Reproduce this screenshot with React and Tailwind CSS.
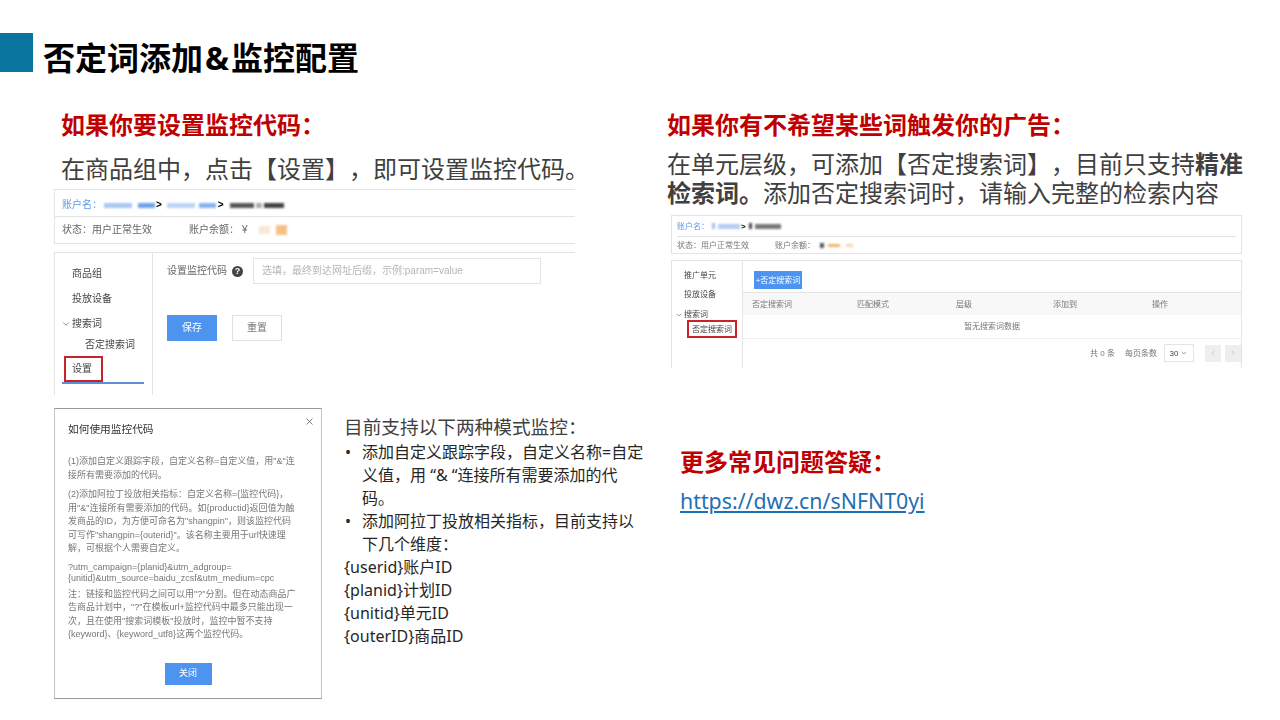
import React from 'react';
import { ChevronDown, ChevronLeft, ChevronRight, X } from 'lucide-react';

const slideFont = "font-['Noto_Sans','Noto_Sans_CJK_SC',sans-serif]";
const shotFont = "font-['Liberation_Sans','Noto_Sans_CJK_SC',sans-serif]";

// blurred-out account values in the screenshots
function Smudge({ className }) {
  return <span className={`inline-block blur-[1px] ${className}`}></span>;
}

function MonitorPanel() {
  return (
    <div className={`${shotFont} w-[521px] h-[206px] flex flex-col text-[10px] leading-[14px] text-[#666666] blur-[0.3px]`}>
      <div className="h-[55px] border-y border-[#e4e4e4] border-l flex flex-col">
        <div className="h-[27px] border-b border-[#e4e4e4] pl-[7px] pt-[4px] flex items-center text-[#5b9be8]">
          <span>账户名：</span>
          <Smudge className="ml-[2px] w-[28px] h-[5px] bg-[#a9c8f3]" />
          <Smudge className="ml-[6px] w-[17px] h-[5px] bg-[#6ea2ea]" />
          <span className="ml-[1px] font-bold text-black">&gt;</span>
          <Smudge className="ml-[5px] w-[28px] h-[5px] bg-[#bcd5f5]" />
          <Smudge className="ml-[4px] w-[17px] h-[5px] bg-[#86b3ee]" />
          <span className="ml-[2px] font-bold text-black">&gt;</span>
          <Smudge className="ml-[6px] w-[24px] h-[5px] bg-[#555555]" />
          <Smudge className="ml-[2px] w-[6px] h-[5px] bg-[#aaaaaa]" />
          <Smudge className="ml-[2px] w-[20px] h-[5px] bg-[#444444]" />
        </div>
        <div className="flex-1 pl-[7px] flex items-center">
          <span>状态：用户正常生效</span>
          <span className="ml-[37px]">账户余额：</span>
          <span className="ml-[3px]">¥</span>
          <Smudge className="ml-[11px] w-[11px] h-[8px] bg-[#fae8d4]" />
          <Smudge className="ml-[6px] w-[11px] h-[10px] bg-[#f7c186]" />
        </div>
      </div>
      <div className="mt-[8px] flex-1 border-t border-[#e4e4e4] border-l flex">
        <div className="w-[98px] border-r border-[#e4e4e4] flex flex-col text-[#444444]">
          <span className="mt-[14px] ml-[17px]">商品组</span>
          <span className="mt-[11px] ml-[17px]">投放设备</span>
          <div className="mt-[11px] ml-[6px] flex items-center gap-[1px]">
            <ChevronDown className="w-[10px] h-[10px]" strokeWidth={1.5} />
            <span>搜索词</span>
          </div>
          <span className="mt-[7px] ml-[30px]">否定搜索词</span>
          <div className="ml-[9px] mt-[4px] w-[39px] h-[26px] border-[2px] border-[#c8222a] pl-[6px] flex items-center">设置</div>
          <div className="ml-[7px] w-[82px] h-[2px] bg-[#5b8fd6]"></div>
        </div>
        <div className="flex-1 pl-[14px] pt-[5px]">
          <div className="flex items-center">
            <span>设置监控代码</span>
            <span className="ml-[5px] w-[11px] h-[11px] rounded-full bg-[#444444] text-white text-[9px] font-bold leading-[11px] text-center">?</span>
            <div className="ml-[10px] w-[288px] h-[26px] border border-[#e4e4e4] pl-[8px] flex items-center text-[#b5b5b5]">选填，最终到达网址后缀，示例:param=value</div>
          </div>
          <div className="mt-[31px] flex gap-[15px]">
            <button className="w-[50px] h-[26px] bg-[#4c94f0] text-white">保存</button>
            <button className="w-[50px] h-[26px] border border-[#e0e0e0] text-[#777777]">重置</button>
          </div>
        </div>
      </div>
    </div>
  );
}

function NegativePanel() {
  return (
    <div className={`${shotFont} w-[571px] h-[153px] flex flex-col text-[8px] leading-[11px] text-[#777777] blur-[0.3px]`}>
      <div className="h-[39px] border border-[#e4e4e4] flex flex-col">
        <div className="h-[21px] mx-[5px] border-b border-[#e4e4e4] flex items-center text-[#5b9be8]">
          <span>账户名：</span>
          <Smudge className="ml-[3px] w-[3px] h-[6px] bg-[#9cc2f2]" />
          <Smudge className="ml-[3px] w-[22px] h-[5px] bg-[#b3cef2]" />
          <span className="ml-[1px] font-bold text-black">&gt;</span>
          <Smudge className="ml-[3px] w-[3px] h-[6px] bg-[#444444]" />
          <Smudge className="ml-[3px] w-[26px] h-[5px] bg-[#777777]" />
        </div>
        <div className="flex-1 pl-[5px] flex items-center">
          <span>状态：用户正常生效</span>
          <span className="ml-[26px]">账户余额：</span>
          <Smudge className="ml-[5px] w-[4px] h-[5px] bg-[#555555]" />
          <Smudge className="ml-[4px] w-[12px] h-[3px] bg-[#eeb565]" />
          <Smudge className="ml-[6px] w-[7px] h-[3px] bg-[#f6d8a8]" />
        </div>
      </div>
      <div className="mt-[6px] flex-1 border-t border-x border-[#e4e4e4] flex">
        <div className="w-[71px] border-r border-[#e4e4e4] flex flex-col text-[#444444]">
          <span className="mt-[9px] ml-[12px]">推广单元</span>
          <span className="mt-[8px] ml-[12px]">投放设备</span>
          <div className="mt-[9px] ml-[3px] flex items-center gap-[1px]">
            <ChevronDown className="w-[8px] h-[8px]" strokeWidth={1.5} />
            <span>搜索词</span>
          </div>
          <div className="ml-[15px] w-[50px] h-[18px] border-[2px] border-[#c8222a] flex items-center justify-center">否定搜索词</div>
        </div>
        <div className="flex-1 flex flex-col">
          <button className="ml-[11px] mt-[10px] w-[48px] h-[18px] bg-[#4c94f0] text-white">+否定搜索词</button>
          <div className="mt-[3px] h-[23px] border-t border-[#e4e4e4] bg-[#f8f8f8] pl-[9px] flex items-center">
            <span className="w-[105px]">否定搜索词</span>
            <span className="w-[99px]">匹配模式</span>
            <span className="w-[97px]">层级</span>
            <span className="w-[99px]">添加到</span>
            <span>操作</span>
          </div>
          <div className="h-[24px] border-b border-[#eeeeee] flex items-center justify-center">暂无搜索词数据</div>
          <div className="mt-[5px] flex items-center justify-end">
            <span>共 0 条</span>
            <span className="ml-[10px]">每页条数</span>
            <div className="ml-[7px] w-[30px] h-[18px] border border-[#e4e4e4] flex items-center justify-center gap-[2px] text-[#444444]">
              30
              <ChevronDown className="w-[8px] h-[8px]" strokeWidth={1.5} />
            </div>
            <div className="ml-[11px] w-[16px] h-[17px] bg-[#eeeeee] flex items-center justify-center">
              <ChevronLeft className="w-[8px] h-[8px] text-[#bbbbbb]" />
            </div>
            <div className="ml-[4px] w-[16px] h-[17px] bg-[#eeeeee] flex items-center justify-center">
              <ChevronRight className="w-[8px] h-[8px] text-[#bbbbbb]" />
            </div>
          </div>
        </div>
      </div>
    </div>
  );
}

function HelpDialog() {
  return (
    <div className={`${shotFont} w-[268px] h-[291px] border border-[#c4c4c4] border-y-[#999999] px-[13px] flex flex-col text-[9px] leading-[13.5px] text-[#777777] blur-[0.25px] whitespace-nowrap`}>
      <div className="flex justify-between">
        <h3 className="mt-[13px] text-[10.7px] leading-[14px] text-[#333333]">如何使用监控代码</h3>
        <X className="-mr-[7px] mt-[7px] w-[11px] h-[11px] text-[#444444]" strokeWidth={1.5} />
      </div>
      <p className="mt-[19px]">(1)添加自定义跟踪字段，自定义名称=自定义值，用"&amp;"连<br />接所有需要添加的代码。</p>
      <p className="mt-[6px]">(2)添加阿拉丁投放相关指标：自定义名称={'{'}监控代码{'}'}，<br />用"&amp;"连接所有需要添加的代码。如{'{'}productid{'}'}返回值为触<br />发商品的ID，为方便可命名为"shangpin"，则该监控代码<br />可写作"shangpin={'{'}outerid{'}'}"。该名称主要用于url快速理<br />解，可根据个人需要自定义。</p>
      <p className="mt-[6px] leading-[11px]">?utm_campaign={'{'}planid{'}'}&amp;utm_adgroup=<br />{'{'}unitid{'}'}&amp;utm_source=baidu_zcsf&amp;utm_medium=cpc</p>
      <p className="mt-[4px]">注：链接和监控代码之间可以用"?"分割。但在动态商品广<br />告商品计划中，"?"在模板url+监控代码中最多只能出现一<br />次，且在使用"搜索词模板"投放时，监控中暂不支持<br />{'{'}keyword{'}'}、{'{'}keyword_utf8{'}'}这两个监控代码。</p>
      <button className="mt-[21px] mx-auto w-[47px] h-[22px] bg-[#4c94f0] text-white">关闭</button>
    </div>
  );
}

export default function App() {
  return (
    <div className={`${slideFont} w-[1280px] h-[720px] bg-white overflow-hidden flex flex-col [text-spacing-trim:space-all]`}>
      <header className="pt-[33px] flex items-start">
        <div className="w-[33px] h-[39px] bg-[#0a769f]"></div>
        <h1 className="ml-[10px] mt-[6px] text-[32px] leading-[38px] font-bold text-black">否定词添加<span className="px-[2px]">&amp;</span>监控配置</h1>
      </header>

      <div className="flex mt-[-6px]">
        <section className="w-[667px] pl-[54px] shrink-0">
          <h2 className="ml-[7px] mt-[39px] text-[24px] leading-[30px] font-bold text-[#c00000]">如果你要设置监控代码：</h2>
          <p className="ml-[7px] mt-[13px] text-[24px] leading-[32px] text-[#404040] whitespace-nowrap">在商品组中，点击【设置】，即可设置监控代码。</p>
          <div className="mt-[4px]">
            <MonitorPanel />
          </div>
        </section>
        <section className="flex-1">
          <h2 className="mt-[39px] text-[24px] leading-[30px] font-bold text-[#c00000]">如果你有不希望某些词触发你的广告：</h2>
          <p className="mt-[9px] w-[600px] text-[24px] leading-[29px] text-[#404040] whitespace-nowrap">
            在单元层级，可添加【否定搜索词】，目前只支持<b>精准<br />检索词。</b>添加否定搜索词时，请输入完整的检索内容
          </p>
          <div className="mt-[8px] ml-[4px]">
            <NegativePanel />
          </div>
        </section>
      </div>

      <div className="flex pl-[54px] mt-[13px]">
        <HelpDialog />
        <div className="ml-[22px] w-[304px] text-[16px] leading-[23px] text-[#262626]">
          <p className="text-[18.67px] leading-[24px] mt-[7px] text-[#404040]">目前支持以下两种模式监控：</p>
          <ul className="mt-[2px]">
            <li className="flex">
              <span className="w-[18px] shrink-0 pl-[1px]">•</span>
              <span>添加自定义跟踪字段，自定义名称=自定<br />义值，用 “&amp; “连接所有需要添加的代<br />码。</span>
            </li>
            <li className="flex">
              <span className="w-[18px] shrink-0 pl-[1px]">•</span>
              <span>添加阿拉丁投放相关指标，目前支持以<br />下几个维度：</span>
            </li>
          </ul>
          <p>{'{userid}'}账户ID</p>
          <p>{'{planid}'}计划ID</p>
          <p>{'{unitid}'}单元ID</p>
          <p>{'{outerID}'}商品ID</p>
        </div>
        <div className="ml-[32px] mt-[39px]">
          <h2 className="text-[24px] leading-[30px] font-bold text-[#c00000]">更多常见问题答疑：</h2>
          <a href="#" className="block mt-[10px] text-[21.33px] leading-[28px] text-[#1f6fb5] underline">https://dwz.cn/sNFNT0yi</a>
        </div>
      </div>
    </div>
  );
}
